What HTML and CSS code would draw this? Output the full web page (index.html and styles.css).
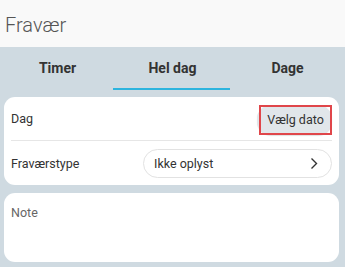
FILE: index.html
```html
<!DOCTYPE html>
<html>
<head>
<meta charset="utf-8">
<link rel="stylesheet" href="styles.css">
</head>
<body>
<div class="page">
  <header class="header"><h1 class="title">Fravær</h1></header>
  <nav class="tabs">
    <div class="tab">Timer</div>
    <div class="tab active">Hel dag</div>
    <div class="tab">Dage</div>
  </nav>
  <main class="content">
    <section class="card">
      <div class="row row-first">
        <span class="label">Dag</span>
        <div class="date-wrap"><button class="date-btn">Vælg dato</button></div>
      </div>
      <div class="row">
        <span class="label">Fraværstype</span>
        <div class="select">
          <span>Ikke oplyst</span>
          <svg class="chev" width="8" height="13" viewBox="0 0 8 13"><path d="M1.5 1.5 L6.5 6.5 L1.5 11.5" fill="none" stroke="#333" stroke-width="1.4"/></svg>
        </div>
      </div>
    </section>
    <section class="card note">
      <span class="note-label">Note</span>
    </section>
  </main>
</div>
</body>
</html>
```
FILE: styles.css
```css
* { box-sizing: border-box; }
html, body { margin: 0; padding: 0; }
body {
  font-family: Roboto, "Noto Sans", sans-serif;
  width: 345px;
  height: 267px;
  overflow: hidden;
  background: #cfdae1;
}
.page { display: flex; flex-direction: column; height: 267px; }
.header {
  height: 47px;
  background: #f9f9f9;
  display: flex;
  align-items: center;
  padding-left: 5px;
}
.title {
  margin: 0;
  font-size: 20px;
  font-weight: 300;
  color: #555;
  padding-top: 3px;
}
.tabs {
  display: grid;
  grid-template-columns: 115px 115px 115px;
  height: 50px;
  background: #cfdae1;
}
.tab {
  display: flex;
  align-items: center;
  justify-content: center;
  font-size: 14px;
  font-weight: 700;
  color: #333;
  padding-bottom: 9px;
  position: relative;
}
.tab.active::after {
  content: "";
  position: absolute;
  left: -2px;
  right: 0;
  top: 41px;
  height: 2px;
  background: #2db4de;
}
.content {
  display: flex;
  flex-direction: column;
  gap: 8px;
  padding: 0 6px 0 4px;
}
.card {
  background: #fff;
  border-radius: 11px;
  padding: 0 7px;
}
.row {
  height: 44px;
  display: flex;
  align-items: center;
  justify-content: space-between;
}
.row-first { border-bottom: 1px solid #e6e6e6; }
.label { font-size: 12.5px; color: #333; }
.date-wrap {
  background: #e1e6ea;
  border-radius: 14px;
  padding-left: 2px;
  margin-top: 2px;
  box-shadow: 0 1px 1px rgba(0,0,0,0.12);
}
.date-btn {
  display: block;
  font-family: inherit;
  font-size: 12.5px;
  color: #333;
  background: transparent;
  border: 2px solid #e0464a;
  border-radius: 0;
  height: 30px;
  width: 73px;
  padding: 0;
}
.select {
  width: 189px;
  height: 29px;
  border: 1px solid #e2e2e2;
  border-radius: 15px;
  display: flex;
  align-items: center;
  justify-content: space-between;
  padding: 0 13px 0 10px;
  font-size: 12.5px;
  color: #333;
}
.note {
  height: 69px;
  padding-top: 9px;
}
.note-label { font-size: 12.5px; color: #666; }
```
